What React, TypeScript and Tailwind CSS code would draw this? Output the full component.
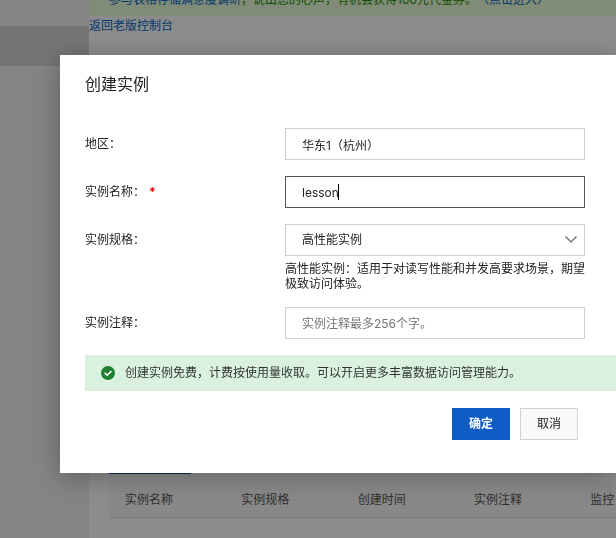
import React, { useState } from 'react';

const columns = ['实例名称', '实例规格', '创建时间', '实例注释', '监控', '操作'];

interface FormRowProps {
  id: string;
  label: string;
  required?: boolean;
  children: React.ReactNode;
}

const FormRow: React.FC<FormRowProps> = ({ id, label, required, children }) => (
  <div className="flex items-start pr-[31px]">
    <label htmlFor={id} className="w-[200px] shrink-0 leading-8">
      {label}：{required && <span className="ml-1 font-bold text-red-600">*</span>}
    </label>
    <div className="relative min-w-0 flex-1">{children}</div>
  </div>
);

const CheckBadge: React.FC = () => (
  <svg viewBox="0 0 14 14" className="h-3.5 w-3.5 shrink-0" aria-hidden="true">
    <circle cx="7" cy="7" r="7" fill="#1e8030" />
    <path d="M3.6 6.8 L6.2 9.2 L10.4 5.1" fill="none" stroke="#fff" strokeWidth="1.6" />
  </svg>
);

const SelectArrow: React.FC = () => (
  <svg
    viewBox="0 0 12 16"
    className="pointer-events-none absolute top-2 right-2 h-4 w-3"
    fill="none"
    stroke="#777777"
    strokeWidth="1.5"
    aria-hidden="true"
  >
    <path d="M0.5 4.5 L6 10 L11.5 4.5" />
  </svg>
);

const ConsolePage: React.FC = () => (
  <div className="flex h-screen overflow-hidden bg-white">
    <aside className="w-[89px] shrink-0 bg-[#f0f0f0] pt-[26px]">
      <div className="h-10 bg-[#d5d5d5]" />
    </aside>
    <main className="flex min-w-0 flex-1 flex-col">
      <div className="-mt-4 flex h-8 shrink-0 items-center bg-[#e9ffda] px-5 whitespace-nowrap text-[#1e8e00]">
        <a href="#survey" className="text-[#0064c8]">参与表格存储满意度调研</a>
        ，说出您的心声，有机会获得100元代金券。
        <a href="#enter" className="text-[#0064c8]">（点击进入）</a>
      </div>
      <a href="#old" className="self-start leading-5 text-[#0064c8]">返回老版控制台</a>

      <section className="mt-auto ml-5 overflow-hidden pb-5">
        <div className="mb-2 h-0.5 w-[82px] bg-[#0050b0]" />
        <table className="w-[698px] table-fixed">
          <thead>
            <tr className="h-9 border-b border-[#e0e0e0] bg-[#f7f7f7]">
              {columns.map((column) => (
                <th key={column} className="px-4 pt-0.5 text-left font-normal text-[#555555]">
                  {column}
                </th>
              ))}
            </tr>
          </thead>
        </table>
      </section>
    </main>
  </div>
);

const CreateInstanceDialog: React.FC = () => {
  const [name, setName] = useState('lesson');
  const [remark, setRemark] = useState('');
  const [showCaret, setShowCaret] = useState(true);

  return (
    <div
      role="dialog"
      aria-labelledby="dialog-title"
      className="min-w-0 flex-1 bg-white pt-[17px] pb-[33px] pl-[25px] shadow-[0_4px_24px_rgba(0,0,0,0.3)]"
    >
      <h2 id="dialog-title" className="mb-8 text-base">创建实例</h2>

      <form className="flex flex-col gap-4" onSubmit={(e) => e.preventDefault()}>
        <FormRow id="region" label="地区">
          <input
            id="region"
            readOnly
            value="华东1（杭州）"
            className="h-8 w-full border border-[#d0d0d0] px-4 outline-none"
          />
        </FormRow>

        <FormRow id="name" label="实例名称" required>
          <input
            id="name"
            value={name}
            onChange={(e) => { setName(e.target.value); setShowCaret(false); }}
            className="h-8 w-full border border-[#555555] px-4 outline-none"
          />
          {showCaret && <span className="absolute top-2 left-[53px] h-4 w-px bg-black" />}
        </FormRow>

        <FormRow id="spec" label="实例规格">
          <select
            id="spec"
            className="block h-8 w-full appearance-none border border-[#d0d0d0] bg-white px-4 outline-none"
          >
            <option>高性能实例</option>
            <option>容量型实例</option>
          </select>
          <SelectArrow />
          <p className="mt-[5px] leading-[15px]">
            高性能实例：适用于对读写性能和并发高要求场景，期望极致访问体验。
          </p>
        </FormRow>

        <FormRow id="remark" label="实例注释">
          <input
            id="remark"
            value={remark}
            onChange={(e) => setRemark(e.target.value)}
            placeholder="实例注释最多256个字。"
            className="h-8 w-full border border-[#d0d0d0] px-4 outline-none placeholder:text-[#757575]"
          />
        </FormRow>

        <div className="flex h-9 items-center gap-2.5 bg-[#d9f1de] px-4 text-[#333333]">
          <CheckBadge />
          创建实例免费，计费按使用量收取。可以开启更多丰富数据访问管理能力。
        </div>

        <div className="flex justify-end gap-2.5 pt-px pr-[38px]">
          <button type="submit" className="h-8 w-[58px] bg-[#0f5cc5] font-bold text-white">
            确定
          </button>
          <button type="button" className="h-8 w-[58px] border border-[#d0d0d0] bg-[#f9f9f9]">
            取消
          </button>
        </div>
      </form>
    </div>
  );
};

export default function App() {
  return (
    <div className="font-['Inter','Noto_Sans_CJK_SC',sans-serif] text-xs text-[#222222]">
      <ConsolePage />
      <div className="fixed inset-0 flex items-start overflow-hidden bg-black/45 pt-[55px] pl-[60px]">
        <CreateInstanceDialog />
      </div>
    </div>
  );
}
